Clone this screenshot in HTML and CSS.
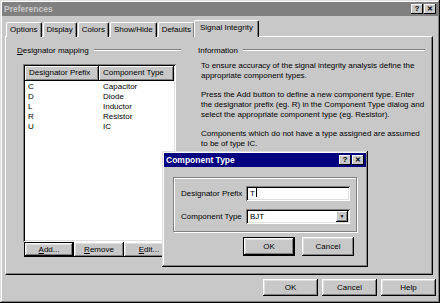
FILE: index.html
```html
<!DOCTYPE html>
<html lang="en">
<head>
    <meta charset="UTF-8">
    <title>Preferences</title>
    <link rel="stylesheet" href="styles.css">
</head>
<body>
    <div class="window">
        <div class="titlebar">
            <span class="title">Preferences</span>
            <div class="caption-btns">
                <span class="cbtn">?</span><span class="cbtn close">&#x2715;</span>
            </div>
        </div>
        <div class="tabs">
            <span class="tab">Options</span>
            <span class="tab">Display</span>
            <span class="tab">Colors</span>
            <span class="tab">Show/Hide</span>
            <span class="tab">Defaults</span>
            <span class="tab active">Signal Integrity</span>
        </div>
        <div class="panel">
            <div class="group mapping">
                <div class="group-head"><span><u>D</u>esignator mapping</span><span class="rule"></span></div>
                <div class="listbox">
                    <div class="list-head">
                        <span class="hcell col1">Designator Prefix</span>
                        <span class="hcell col2">Component Type</span>
                    </div>
                    <div class="row"><span class="col1">C</span><span>Capacitor</span></div>
                    <div class="row"><span class="col1">D</span><span>Diode</span></div>
                    <div class="row"><span class="col1">L</span><span>Inductor</span></div>
                    <div class="row"><span class="col1">R</span><span>Resistor</span></div>
                    <div class="row"><span class="col1">U</span><span>IC</span></div>
                </div>
                <div class="list-btns">
                    <span class="btn default"><u>A</u>dd...</span>
                    <span class="btn"><u>R</u>emove</span>
                    <span class="btn"><u>E</u>dit...</span>
                </div>
            </div>
            <div class="group info">
                <div class="group-head"><span>Information</span><span class="rule"></span></div>
                <p>To ensure accuracy of the signal integrity analysis define the appropriate component types.</p>
                <p>Press the Add button to define a new component type. Enter the designator prefix (eg. R) in the Component Type dialog and select the appropriate component type (eg. Resistor).</p>
                <p>Components which do not have a type assigned are assumed to be of type IC.</p>
            </div>
        </div>
        <div class="footer">
            <span class="btn wide">OK</span>
            <span class="btn wide">Cancel</span>
            <span class="btn wide">Help</span>
        </div>

        <div class="dialog">
            <div class="titlebar active">
                <span class="title">Component Type</span>
                <div class="caption-btns">
                    <span class="cbtn">?</span><span class="cbtn close">&#x2715;</span>
                </div>
            </div>
            <div class="frame">
                <div class="field">
                    <span class="label">Designator Prefix</span>
                    <span class="input">T<span class="caret"></span></span>
                </div>
                <div class="field">
                    <span class="label">Component Type</span>
                    <span class="input combo">BJT<span class="drop">&#x25BC;</span></span>
                </div>
            </div>
            <div class="dlg-btns">
                <span class="btn default dlg">OK</span>
                <span class="btn dlg">Cancel</span>
            </div>
        </div>
    </div>
</body>
</html>
```

FILE: styles.css
```css
body {
    margin: 0;
    font-family: "Liberation Sans", Arial, sans-serif;
    font-size: 8px;
    color: #000;
    background: #c8c8c8;
}
.window {
    position: relative;
    width: 440px;
    height: 303px;
    box-sizing: border-box;
    padding: 2px;
    background: #c8c8c8;
    box-shadow: inset -1px -1px #000, inset 1px 1px #dfdfdf, inset -2px -2px #808080, inset 2px 2px #fff;
}
.titlebar {
    height: 14px;
    display: flex;
    align-items: center;
    justify-content: space-between;
    padding: 0 2px 0 2px;
    background: #808080;
    color: #c8c8c8;
}
.titlebar.active {
    background: #000080;
    color: #fff;
}
.title {
    font-weight: bold;
    font-size: 8.5px;
}
.caption-btns {
    display: flex;
    gap: 1px;
}
.cbtn {
    width: 12px;
    height: 10px;
    background: #c8c8c8;
    color: #000;
    font-weight: bold;
    font-size: 8px;
    line-height: 10px;
    text-align: center;
    box-shadow: inset -1px -1px #000, inset 1px 1px #fff;
}
.cbtn.close {
    font-size: 7px;
}
.tabs {
    display: flex;
    height: 17px;
    margin-top: 3px;
    padding-left: 4px;
    position: relative;
    z-index: 1;
}
.tab {
    margin-top: 3px;
    height: 14px;
    line-height: 13px;
    padding: 0 3px;
    margin-right: 1px;
    border-top: 1px solid #fff;
    border-left: 1px solid #fff;
    border-right: 1px solid #000;
    border-radius: 2px 2px 0 0;
    box-shadow: inset -1px 0 #808080;
    background: #c8c8c8;
}
.tab.active {
    margin-top: 1px;
    height: 16px;
    line-height: 14px;
    margin-left: -2px;
    padding: 0 5px;
}
.panel {
    margin: 0 5px 0 3px;
    height: 239px;
    box-sizing: border-box;
    display: flex;
    padding: 8px 0 0 11px;
    border-top: 1px solid #fff;
    border-left: 1px solid #fff;
    border-right: 1px solid #000;
    border-bottom: 1px solid #000;
    box-shadow: inset -1px -1px #808080;
}
.group-head {
    display: flex;
    align-items: center;
    height: 10px;
}
.rule {
    flex: 1;
    height: 0;
    margin-left: 5px;
    border-top: 1px solid #808080;
    border-bottom: 1px solid #fff;
}
.mapping {
    width: 164px;
}
.listbox {
    margin: 9px 0 0 6px;
    width: 153px;
    height: 178px;
    box-sizing: border-box;
    background: #fff;
    padding: 2px 2px 0 2px;
    box-shadow: inset 1px 1px #808080, inset -1px -1px #fff, inset 2px 2px #000, inset -2px -2px #dfdfdf;
}
.list-head {
    display: flex;
    height: 15px;
    margin-bottom: 1px;
}
.hcell {
    background: #c8c8c8;
    line-height: 14px;
    padding-left: 4px;
    box-sizing: border-box;
    box-shadow: inset -1px -1px #000, inset 1px 1px #fff, inset -2px -2px #808080;
}
.hcell.col1 {
    width: 74px;
}
.hcell.col2 {
    flex: 1;
}
.row {
    display: flex;
    height: 10px;
    line-height: 10px;
    padding-left: 3px;
}
.row .col1 {
    width: 75px;
}
.list-btns {
    display: flex;
    margin-left: 7px;
}
.btn {
    display: inline-block;
    width: 50px;
    height: 15px;
    line-height: 15px;
    text-align: center;
    background: #c8c8c8;
    box-sizing: border-box;
    box-shadow: inset -1px -1px #000, inset 1px 1px #fff, inset -2px -2px #808080, inset 2px 2px #dfdfdf;
}
.btn.default {
    border: 1px solid #000;
    line-height: 13px;
}
.info {
    flex: 1;
    margin-left: 17px;
    padding-right: 7px;
}
.info p {
    margin: 6px 0 0 3px;
    line-height: 9.7px;
}
.info p + p {
    margin-top: 9.7px;
}
.footer {
    display: flex;
    justify-content: flex-end;
    gap: 4px;
    margin-top: 4px;
    padding-right: 2px;
}
.btn.wide {
    width: 55px;
    height: 17px;
    line-height: 17px;
}
.dialog {
    position: absolute;
    left: 162px;
    top: 151px;
    width: 206px;
    height: 116px;
    box-sizing: border-box;
    padding: 2px;
    background: #c8c8c8;
    box-shadow: inset -1px -1px #000, inset 1px 1px #dfdfdf, inset -2px -2px #808080, inset 2px 2px #fff;
}
.frame {
    margin: 10px 0 0 9px;
    width: 184px;
    height: 55px;
    box-sizing: border-box;
    padding: 8px 6px 0 7px;
    border: 1px solid #808080;
    box-shadow: inset 1px 1px #fff, 1px 1px #fff;
}
.field {
    display: flex;
    align-items: center;
    justify-content: space-between;
    margin-bottom: 8px;
}
.input {
    position: relative;
    width: 104px;
    height: 15px;
    line-height: 15px;
    box-sizing: border-box;
    padding-left: 4px;
    background: #fff;
    box-shadow: inset 1px 1px #808080, inset -1px -1px #fff, inset 2px 2px #000, inset -2px -2px #dfdfdf;
}
.caret {
    display: inline-block;
    width: 1px;
    height: 9px;
    background: #000;
    vertical-align: -1px;
    margin-left: 1px;
}
.drop {
    position: absolute;
    right: 2px;
    top: 2px;
    width: 12px;
    height: 11px;
    line-height: 11px;
    font-size: 5px;
    text-align: center;
    background: #c8c8c8;
    box-shadow: inset -1px -1px #000, inset 1px 1px #fff, inset -2px -2px #808080;
}
.dlg-btns {
    display: flex;
    justify-content: flex-end;
    gap: 7px;
    width: 184px;
    margin: 5px 0 0 9px;
    padding-right: 3px;
    box-sizing: border-box;
}
.btn.dlg {
    width: 52px;
    height: 19px;
    line-height: 19px;
}
.btn.dlg.default {
    line-height: 17px;
}
```
